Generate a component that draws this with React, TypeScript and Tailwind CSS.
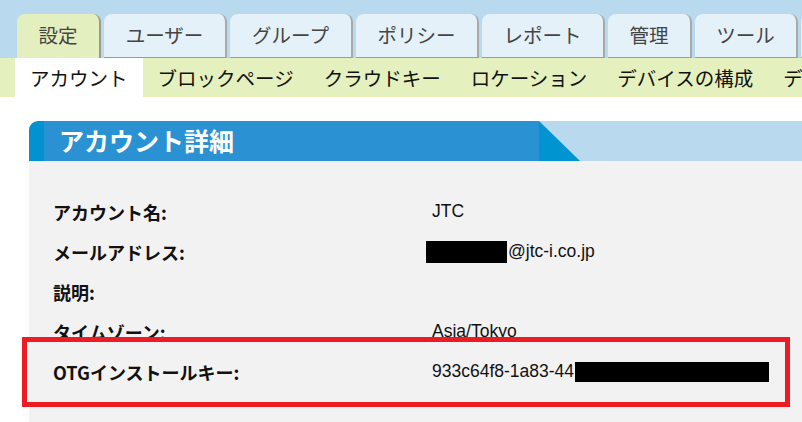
import React from "react";

const jp = { fontFamily: '"Noto Sans CJK JP", "Noto Sans", sans-serif' };
const ar = { fontFamily: '"Liberation Sans", Arial, sans-serif' };

const tabs = [
  { label: "設定", w: "w-[84px]", active: true },
  { label: "ユーザー", w: "w-[123px]" },
  { label: "グループ", w: "w-[123px]" },
  { label: "ポリシー", w: "w-[123px]" },
  { label: "レポート", w: "w-[123px]" },
  { label: "管理", w: "w-[84px]" },
  { label: "ツール", w: "w-[103px]" },
  { label: "", w: "w-[103px]" },
];

const subs = ["アカウント", "ブロックページ", "クラウドキー", "ロケーション", "デバイスの構成", "デバイス"];

export default function App() {
  return (
    <div className="relative w-[802px] h-[422px] overflow-hidden bg-white" style={jp}>
      {/* top tabs */}
      <div className="h-[58px] bg-[#b9d9ee] flex items-end pl-[17px] gap-[3px] overflow-hidden">
        {tabs.map((t, i) => (
          <div
            key={i}
            className={
              "shrink-0 h-[44px] rounded-t-[8px] flex items-center justify-center text-[19.5px] text-[#444] " +
              t.w +
              (t.active
                ? " bg-[#e3efbe] border-r-2 border-[#9c9c88]"
                : " bg-[#e5f1f9] border-r-2 border-[#a9a9a9] border-b border-b-[#57aee6]")
            }
          >
            <span className="pb-[2px]">{t.label}</span>
          </div>
        ))}
      </div>
      {/* sub nav */}
      <div className="h-[39px] bg-[#e4f0bd] flex pl-[15px] whitespace-nowrap">
        {subs.map((s, i) => (
          <div
            key={s}
            className={
              "shrink-0 px-[15px] flex items-center text-[19.5px] text-[#111] " +
              (i === 0 ? "bg-white" : "")
            }
          >
            {s}
          </div>
        ))}
      </div>
      {/* panel */}
      <div className="mt-[24px] ml-[29px]">
        <div className="h-[40px] flex">
          <div className="w-[15px] bg-[#0093d0] rounded-tl-[9px]" />
          <div className="w-[495px] bg-[#2a92d2] flex items-center pl-[15px] text-white font-bold text-[25px] leading-none">
            <span className="pb-[2px]">アカウント詳細</span>
          </div>
          <svg width="41" height="40" viewBox="0 0 41 40" className="shrink-0 block">
            <rect width="41" height="40" fill="#b9d9ee" />
            <polygon points="0,0 41,40 0,40" fill="#0094d1" />
          </svg>
          <div className="flex-1 bg-[#b9d9ee]" />
        </div>
        <div className="bg-[#f2f2f2] h-[300px] pt-[31px] pl-[24px]">
          {[
            ["アカウント名:", <span>JTC</span>],
            [
              "メールアドレス:",
              <span className="flex items-center">
                <span className="inline-block w-[81px] h-[22px] bg-black -ml-[6px] mr-[1px]" />
                @jtc-i.co.jp
              </span>,
            ],
            ["説明:", <span />],
            ["タイムゾーン:", <span>Asia/Tokyo</span>],
            [
              "OTGインストールキー:",
              <span className="flex items-center">
                933c64f8-1a83-44
                <span className="inline-block w-[194px] h-[20px] bg-black ml-[1px]" />
              </span>,
            ],
          ].map(([label, value], i) => (
            <div key={i} className="h-[40px] flex items-center">
              <div className="w-[379px] font-bold text-[18px] text-[#111] leading-none">{label}</div>
              <div className="text-[17.5px] text-[#111] leading-none" style={ar}>
                {value}
              </div>
            </div>
          ))}
        </div>
      </div>
      {/* red annotation box */}
      <div className="absolute left-[22px] top-[337px] w-[768px] h-[70px] border-[5px] border-[#ed1c24]" />
    </div>
  );
}
